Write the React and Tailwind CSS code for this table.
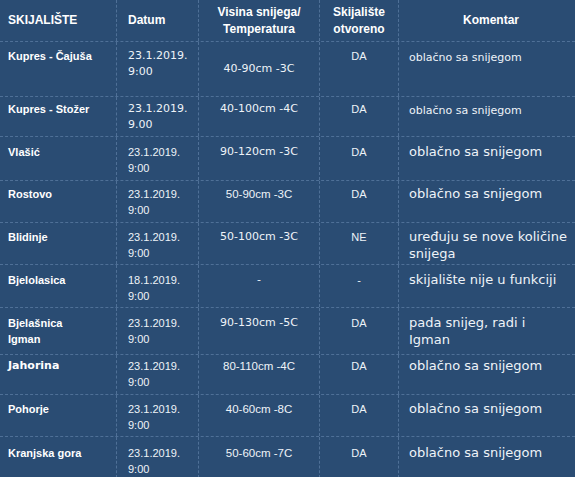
import React from "react"

const ROWS = [
  { name: ["Kupres - Čajuša"], date: ["23.1.2019.", "9:00"], temp: "40-90cm -3C", open: "DA", note: ["oblačno sa snijegom"], h: "h-[55px]", pt: "pt-[6px]", oldDate: true, small: true, midTemp: true },
  { name: ["Kupres - Stožer"], date: ["23.1.2019.", "9.00"], temp: "40-100cm -4C", open: "DA", note: ["oblačno sa snijegom"], h: "h-[40px]", pt: "pt-[4px]", oldDate: true, small: true },
  { name: ["Vlašić"], date: ["23.1.2019.", "9:00"], temp: "90-120cm -3C", open: "DA", note: ["oblačno sa snijegom"], h: "h-[44px]", pt: "pt-[7px]" },
  { name: ["Rostovo"], date: ["23.1.2019.", "9:00"], temp: "50-90cm -3C", open: "DA", note: ["oblačno sa snijegom"], h: "h-[42px]", pt: "pt-[5px]", arialTemp: true },
  { name: ["Blidinje"], date: ["23.1.2019.", "9:00"], temp: "50-100cm -3C", open: "NE", note: ["uređuju se nove količine", "snijega"], h: "h-[42px]", pt: "pt-[6px]" },
  { name: ["Bjelolasica"], date: ["18.1.2019.", "9:00"], temp: "-", open: "-", note: ["skijalište nije u funkciji"], h: "h-[43px]", pt: "pt-[7px]" },
  { name: ["Bjelašnica", "Igman"], date: ["23.1.2019.", "9:00"], temp: "90-130cm -5C", open: "DA", note: ["pada snijeg, radi i", "Igman"], h: "h-[47px]", pt: "pt-[7px]" },
  { name: ["Jahorina"], date: ["23.1.2019.", "9:00"], temp: "80-110cm -4C", open: "DA", note: ["oblačno sa snijegom"], h: "h-[40px]", pt: "pt-[3px]", arialTemp: true, wideName: true },
  { name: ["Pohorje"], date: ["23.1.2019.", "9:00"], temp: "40-60cm -8C", open: "DA", note: ["oblačno sa snijegom"], h: "h-[42px]", pt: "pt-[6px]", arialTemp: true },
  { name: ["Kranjska gora"], date: ["23.1.2019.", "9:00"], temp: "50-60cm -7C", open: "DA", note: ["oblačno sa snijegom"], h: "h-[42px]", pt: "pt-[8px]", arialTemp: true },
]

const grid = "grid grid-cols-[117px_82px_121px_79px_176px] border-b border-dashed border-[#4f7097]"
const cell = "border-r border-dashed border-[#4f7097]"

export default function App() {
  return (
    <div className="w-[575px] h-[477px] overflow-hidden bg-[#2a4c73] text-[#eef3f8] font-['Liberation_Sans',Arial,sans-serif]">
      <div className={`${grid} h-[42px] text-[12px] font-bold leading-[17px] text-white`}>
        <div className={`${cell} flex items-center pl-[8px]`}>SKIJALIŠTE</div>
        <div className={`${cell} flex items-center pl-[11px]`}>Datum</div>
        <div className={`${cell} flex flex-col items-center justify-center text-center`}>
          <span>Visina snijega/</span>
          <span>Temperatura</span>
        </div>
        <div className={`${cell} flex flex-col items-center justify-center text-center`}>
          <span>Skijalište</span>
          <span>otvoreno</span>
        </div>
        <div className="flex items-center justify-center pl-[8px]">Komentar</div>
      </div>

      {ROWS.map((r) => (
        <div key={r.name[0]} className={`${grid} ${r.h}`}>
          <div
            className={`${cell} ${r.pt} pl-[8px] font-bold text-white leading-[16px] ${
              r.wideName ? "text-[11px] font-['DejaVu_Sans',Verdana,sans-serif]" : "text-[11px]"
            }`}
          >
            {r.name.map((n) => (
              <div key={n}>{n}</div>
            ))}
          </div>
          <div
            className={`${cell} ${r.pt} pl-[11px] text-[11px] leading-[16px] ${
              r.oldDate ? "font-['DejaVu_Sans',Verdana,sans-serif] text-[10.5px]" : ""
            }`}
          >
            {r.date.map((d) => (
              <div key={d}>{d}</div>
            ))}
          </div>
          <div
            className={`${cell} flex justify-center leading-[16px] ${
              r.midTemp ? "items-center" : `items-start ${r.pt}`
            } ${r.arialTemp ? "text-[11.5px]" : "text-[11px] font-['DejaVu_Sans',Verdana,sans-serif]"}`}
          >
            {r.temp}
          </div>
          <div className={`${cell} ${r.pt} text-center text-[11px] leading-[16px]`}>{r.open}</div>
          <div
            className={`${r.pt} pl-[10px] whitespace-nowrap font-['DejaVu_Sans',Verdana,sans-serif] ${
              r.small ? "text-[11px] leading-[16px] mt-[2px]" : "text-[13px] leading-[17px] -mt-px"
            }`}
          >
            {r.note.map((n) => (
              <div key={n}>{n}</div>
            ))}
          </div>
        </div>
      ))}
    </div>
  )
}
